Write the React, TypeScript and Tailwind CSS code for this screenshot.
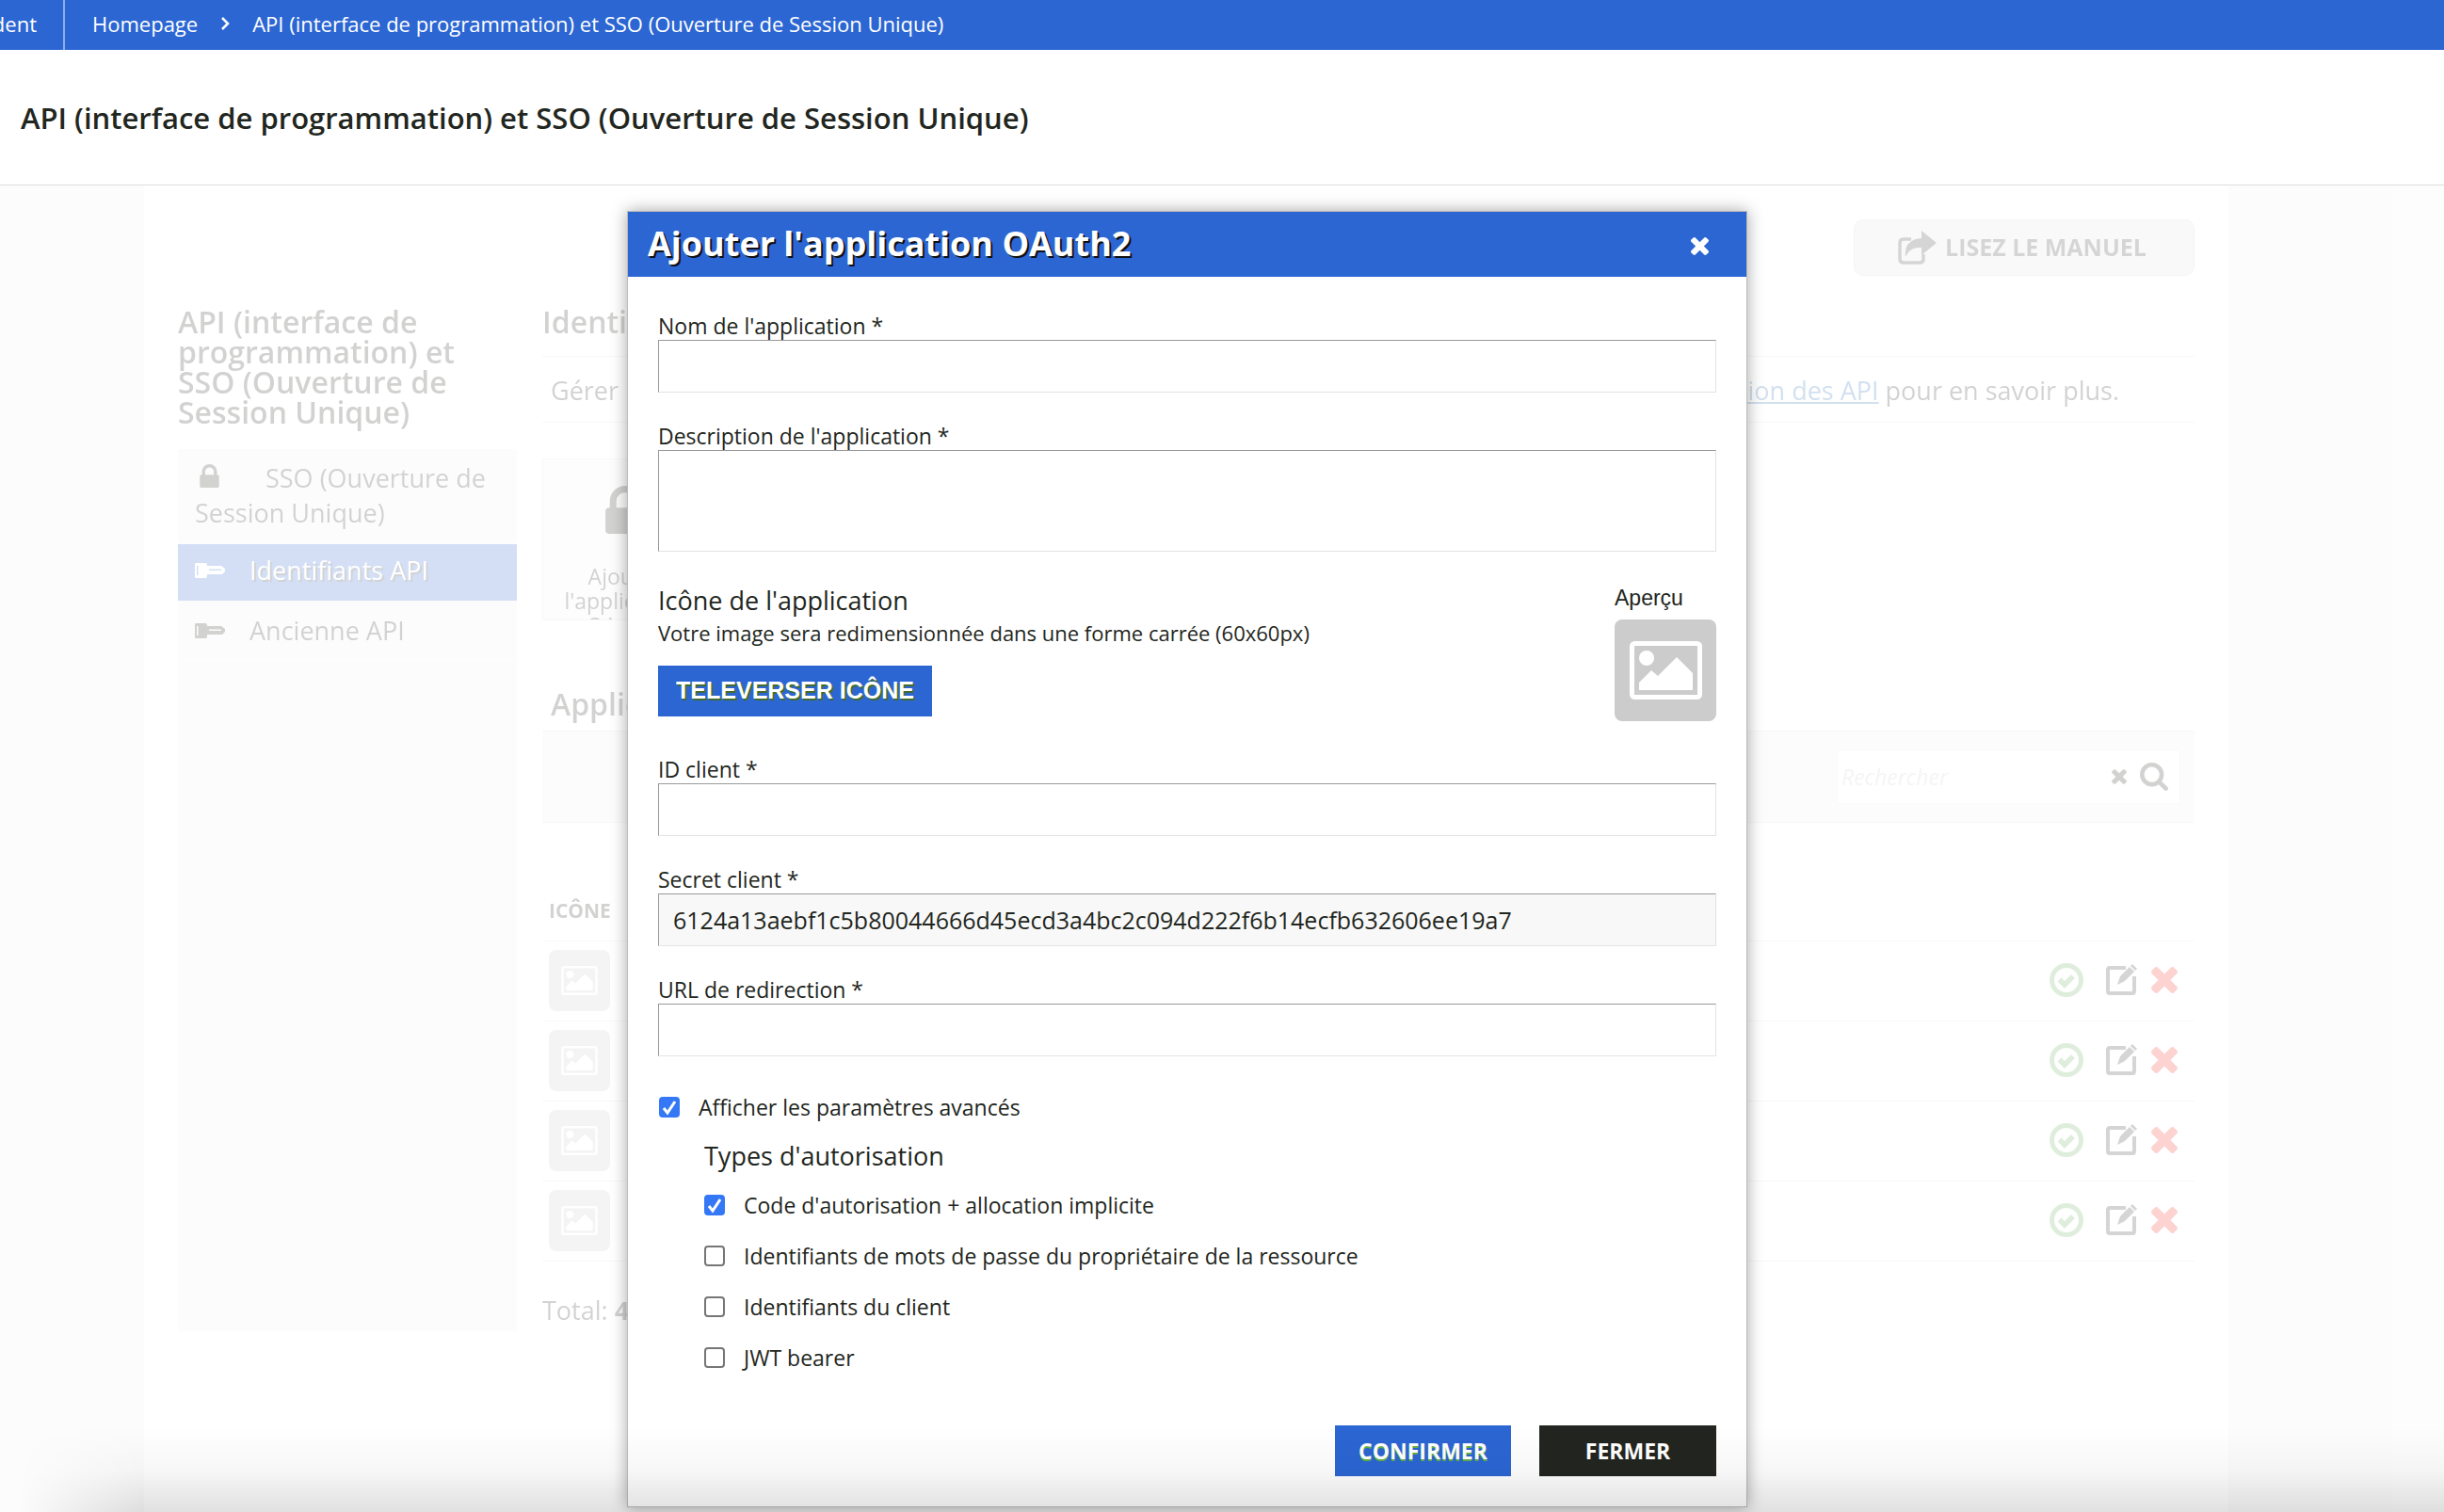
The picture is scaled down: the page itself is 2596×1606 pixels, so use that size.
import { useState } from 'react'
import type { ReactNode } from 'react'

const TIMES =
  'M1490 1322q0 40-28 68l-136 136q-28 28-68 28t-68-28l-294-294-294 294q-28 28-68 28t-68-28l-136-136q-28-28-28-68t28-68l294-294-294-294q-28-28-28-68t28-68l136-136q28-28 68-28t68 28l294 294 294-294q28-28 68-28t68 28l136 136q28 28 28 68t-28 68l-294 294 294 294q28 28 28 68z'

function TimesIcon({ className }: { className: string }) {
  return (
    <svg viewBox="302 366 1188 1188" className={className} fill="currentColor" aria-hidden="true">
      <path d={TIMES} />
    </svg>
  )
}

function LockIcon({ className }: { className: string }) {
  return (
    <svg viewBox="320 128 1152 1408" className={className} fill="currentColor" aria-hidden="true">
      <path d="M640 768h512v-192q0-106-75-181t-181-75-181 75-75 181v192zm832 96v576q0 40-28 68t-68 28h-960q-40 0-68-28t-28-68v-576q0-40 28-68t68-28h32v-192q0-184 132-316t316-132 316 132 132 316v192h32q40 0 68 28t28 68z" />
    </svg>
  )
}

function SearchIcon({ className }: { className: string }) {
  return (
    <svg viewBox="64 128 1664 1664" className={className} fill="currentColor" aria-hidden="true">
      <path d="M1216 832q0-185-131.5-316.5t-316.5-131.5-316.5 131.5-131.5 316.5 131.5 316.5 316.5 131.5 316.5-131.5 131.5-316.5zm512 832q0 52-38 90t-90 38q-54 0-90-38l-343-342q-179 124-399 124-143 0-273.5-55.5t-225-150-150-225-55.5-273.5 55.5-273.5 150-225 225-150 273.5-55.5 273.5 55.5 225 150 150 225 55.5 273.5q0 220-124 399l343 343q37 37 37 90z" />
    </svg>
  )
}

function KeyIcon({ className }: { className: string }) {
  return (
    <svg viewBox="0 0 32 18" className={className} fill="currentColor" aria-hidden="true">
      <path fillRule="evenodd" d="M1 1h10q2 0 2 2v12q0 2-2 2H1q-1 0-1-1V2q0-1 1-1zm1 3v10h1.500V4z" />
      <path fillRule="evenodd" d="M13 4h15l4 3v3l-3 3H13zm2 3.500v1.500h13V7.500z" />
    </svg>
  )
}

function ShareIcon({ className }: { className: string }) {
  return (
    <svg viewBox="0 0 42 36" className={className} aria-hidden="true">
      <path d="M14 9H6q-4 0-4 4v17q0 4 4 4h17q4 0 4-4v-5" fill="none" stroke="currentColor" strokeWidth="3.500" />
      <path d="M25 0l16 13-16 13v-8q-12-1-17 10Q6 9 25 8z" fill="currentColor" />
    </svg>
  )
}

function CheckCircleIcon() {
  return (
    <svg viewBox="0 0 36 36" className="h-9 w-9" fill="none" stroke="currentColor" aria-hidden="true">
      <circle cx="18" cy="18" r="15.500" strokeWidth="5" />
      <path d="M10.500 17.500l5.500 5.500L25 14" strokeWidth="5.500" />
    </svg>
  )
}

function EditIcon() {
  return (
    <svg viewBox="0 0 33 33" className="h-[33px] w-[33px]" aria-hidden="true">
      <path d="M21 4H4q-2 0-2 2v23q0 2 2 2h24q2 0 2-2V13" fill="none" stroke="currentColor" strokeWidth="4" />
      <path d="M12 22l3-9L25 3l5 5-10 10z" fill="currentColor" />
      <path d="M26 2l2-2 5 5-2 2z" fill="currentColor" />
    </svg>
  )
}

function PictureIcon({ className }: { className: string }) {
  return (
    <svg viewBox="0 0 77 62" className={className} aria-hidden="true">
      <rect x="2.500" y="2.500" width="72" height="57" rx="3" fill="none" stroke="#fff" strokeWidth="5" />
      <circle cx="18" cy="18" r="8" fill="#fff" />
      <path d="M10 52v-8l13-13 7 6 20-20 17 17v18z" fill="#fff" />
    </svg>
  )
}

const rows = [1, 2, 3, 4]

function Credentials() {
  return (
    <div className="flex min-h-[1409px] bg-[#f4f4f4] pl-[153px] pr-[229px] opacity-20">
      <div className="flex-1 bg-white pl-9 pr-9 pt-9">
        <div className="flex justify-end">
          <button className="flex h-[60px] w-[362px] items-center justify-center gap-2 rounded-[10px] border border-[#ccc] bg-[#e6e6e6] pr-1 text-[25px] font-bold text-[#333]">
            <ShareIcon className="h-9 w-[42px]" />
            LISEZ LE MANUEL
          </button>
        </div>
        <div className="mt-8 flex gap-[27px]">
          <aside className="w-[360px] shrink-0">
            <h2 className="pt-px text-[32px] font-semibold leading-8">
              API (interface de programmation) et SSO (Ouverture de Session Unique)
            </h2>
            <nav className="mt-[23px] h-[937px] bg-[#f3f3f3] text-[27px]">
              <a href="#sso" className="block border-b-4 border-[#fafafa] px-[18px] pb-[11px] pt-3 leading-[37px]">
                <LockIcon className="mr-[49px] ml-[5px] inline h-[25px] w-[21px] align-baseline" />
                SSO (Ouverture de Session Unique)
              </a>
              <a href="#api" className="flex h-[60px] items-center gap-[26px] bg-[#2c66d3] px-[18px] pb-1 text-white [text-shadow:2px_2px_1px_#222]">
                <KeyIcon className="h-[18px] w-8" />
                Identifiants API
              </a>
              <a href="#old" className="flex h-16 items-center gap-[26px] border-b-2 border-[#fafafa] px-[18px] pt-0.5">
                <KeyIcon className="h-[18px] w-8" />
                Ancienne API
              </a>
            </nav>
          </aside>
          <main className="flex-1">
            <h2 className="h-[54px] border-b border-[#ddd] text-[32px] font-semibold leading-[33px]">Identifiants API</h2>
            <p className="flex h-[70px] items-center justify-between border-b border-[#ddd] pl-[9px] pr-20 pt-1 text-[27px]">
              <span>Gérer</span>
              <span>
                <a href="#doc" className="text-[#2369b4] underline">documentation des API</a> pour en savoir plus.
              </span>
            </p>
            <button className="mt-[38px] flex h-[172px] w-[176px] flex-col items-center overflow-hidden border border-[#ddd] bg-[#f6f6f6] px-3 pt-7 text-[23px] leading-[26px]">
              <LockIcon className="mb-8 h-[51px] w-[42px] shrink-0" />
              Ajouter l'application OAuth2
            </button>
            <h3 className="mt-[66px] pb-[5px] pl-[9px] text-[32px] font-semibold leading-[46px]">Applications</h3>
            <div className="flex h-[98px] items-center justify-end border-y border-[#ddd] bg-[#f3f3f3] pr-[15px]">
              <div className="flex h-[58px] w-[365px] items-center border border-[#e8e8e8] bg-white pl-1 pr-3">
                <input aria-label="Rechercher" placeholder="Rechercher" className="w-0 flex-1 text-[23px] italic outline-none placeholder:text-[#ccc]" />
                <TimesIcon className="mr-3.5 h-4 w-4" />
                <SearchIcon className="h-[30px] w-[30px]" />
              </div>
            </div>
            <table className="mt-[66px] w-full">
              <thead>
                <tr className="border-b border-[#ddd]">
                  <th className="h-[59px] pb-1 pl-[7px] text-left text-[21px] leading-[30px]">ICÔNE</th>
                  <th></th>
                </tr>
              </thead>
              <tbody>
                {rows.map(i => (
                  <tr key={i} className="h-[85px] border-b border-[#ddd]">
                    <td className="pl-[7px]">
                      <div className="flex h-[65px] w-[65px] items-center justify-center rounded-lg bg-[#ccc]">
                        <PictureIcon className="h-[31px] w-[39px]" />
                      </div>
                    </td>
                    <td className="pb-0.5 pr-[18px]">
                      <div className="flex items-center justify-end">
                        <button aria-label="Activer" className="mr-6 text-[#64af55]"><CheckCircleIcon /></button>
                        <button aria-label="Modifier" className="mr-[15px] text-[#333]"><EditIcon /></button>
                        <button aria-label="Supprimer" className="text-[#f52a1e]"><TimesIcon className="h-7 w-7" /></button>
                      </div>
                    </td>
                  </tr>
                ))}
              </tbody>
            </table>
            <p className="mt-8 text-[27px] leading-[40px]">Total: <b>4</b></p>
          </main>
        </div>
      </div>
    </div>
  )
}

const boxClass =
  'block w-full border border-[#e3e3e3] border-l-[#999] border-t-[#999] bg-white px-[15px] text-[25px] outline-none read-only:bg-[#f8f8f8]'
const labelClass = 'block pb-0.5 text-[23px] leading-[26px]'

function Field({ id, label, value }: { id: string; label: string; value?: string }) {
  return (
    <div>
      <label htmlFor={id} className={labelClass}>{label}</label>
      <input id={id} className={`${boxClass} h-14`} defaultValue={value} readOnly={value !== undefined} />
    </div>
  )
}

function Check({ checked = false, children }: { checked?: boolean; children: ReactNode }) {
  const [on, setOn] = useState(checked)
  return (
    <label className="flex h-[54px] items-center gap-5 text-[23px]">
      <span className="relative flex h-[22px] w-[22px]">
        <input
          type="checkbox"
          checked={on}
          onChange={e => setOn(e.target.checked)}
          className="h-[22px] w-[22px] appearance-none rounded-[4px] border-2 border-[#767676] bg-white checked:border-[#3478f6] checked:bg-[#3478f6]"
        />
        {on && (
          <svg viewBox="0 0 22 22" className="pointer-events-none absolute inset-0" fill="none" stroke="#fff" strokeWidth="3" aria-hidden="true">
            <path d="M5 12l4 5 8-12" />
          </svg>
        )}
      </span>
      {children}
    </label>
  )
}

function AddApplicationDialog() {
  return (
    <div className="absolute inset-x-0 top-[224px] flex justify-center pr-[74px]">
      <div role="dialog" aria-labelledby="dialog-title" className="w-[1190px] border border-[#bbb] bg-white shadow-[0_0_16px_rgba(0,0,0,0.35)]">
        <div className="flex h-[69px] items-center justify-between bg-[#2c66d3] pl-[21px] pr-10 text-white">
          <h2 id="dialog-title" className="pb-0.5 text-[36px] font-bold leading-[67px] [text-shadow:2px_2px_0_#111]">
            Ajouter l'application OAuth2
          </h2>
          <button aria-label="Fermer la fenêtre" className="pt-1"><TimesIcon className="h-[19px] w-[19px]" /></button>
        </div>
        <form className="px-8 pb-8 pt-[39px]" onSubmit={e => e.preventDefault()}>
          <div className="space-y-[33px]">
            <Field id="name" label="Nom de l'application *" />
            <div>
              <label htmlFor="description" className={labelClass}>Description de l'application *</label>
              <textarea id="description" className={`${boxClass} h-[108px] resize-none`} />
            </div>
          </div>
          <div className="mt-[34px] flex justify-between">
            <div>
              <h3 className="text-[27px] leading-9">Icône de l'application</h3>
              <p className="mt-0.5 text-[22px] leading-[28px]">Votre image sera redimensionnée dans une forme carrée (60x60px)</p>
              <button className="mt-[21px] h-[54px] w-[291px] bg-[#2c66d3] font-['Liberation_Sans',Arial,sans-serif] text-[25px] font-bold text-white [text-shadow:2px_2px_0_#406b30]">
                TELEVERSER ICÔNE
              </button>
            </div>
            <div className="w-[108px]">
              <p className="font-['Liberation_Sans',Arial,sans-serif] text-[23px] leading-[30px]">Aperçu</p>
              <div className="mt-2 flex h-[108px] items-center justify-center rounded-lg bg-[#ccc]">
                <PictureIcon className="h-[62px] w-[77px]" />
              </div>
            </div>
          </div>
          <div className="mt-[38px] space-y-[33px]">
            <Field id="client-id" label="ID client *" />
            <Field id="client-secret" label="Secret client *" value="6124a13aebf1c5b80044666d45ecd3a4bc2c094d222f6b14ecfb632606ee19a7" />
            <Field id="redirect-url" label="URL de redirection *" />
          </div>
          <div className="mt-[27px] pl-px">
            <Check checked>Afficher les paramètres avancés</Check>
            <fieldset className="pl-12">
              <legend className="text-[27px] leading-[50px]">Types d'autorisation</legend>
              <Check checked>Code d'autorisation + allocation implicite</Check>
              <Check>Identifiants de mots de passe du propriétaire de la ressource</Check>
              <Check>Identifiants du client</Check>
              <Check>JWT bearer</Check>
            </fieldset>
          </div>
          <div className="mt-[45px] flex justify-end gap-[30px] text-[23px] font-bold text-white">
            <button className="h-[54px] w-[187px] bg-[#2c66d3] [text-shadow:0_2px_0_#5fae46]">CONFIRMER</button>
            <button type="button" className="h-[54px] w-[188px] bg-[#232620]">FERMER</button>
          </div>
        </form>
      </div>
    </div>
  )
}

export default function App() {
  return (
    <div className="relative h-screen overflow-hidden bg-white font-['Open_Sans','Noto_Sans',sans-serif] text-[#222620]">
      <header className="flex h-[53px] items-center overflow-hidden bg-[#2c66d3] text-[22px] font-medium text-white">
        <div className="flex h-full w-[69px] shrink-0 items-center justify-end border-r-2 border-[#8eaee8] pb-[3px] pr-7">
          <span>Président</span>
        </div>
        <nav className="flex items-center pb-[3px] pl-[29px]">
          <a href="#home">Homepage</a>
          <svg viewBox="0 0 10 16" className="ml-6 mr-6 h-4 w-[10px]" fill="none" stroke="currentColor" strokeWidth="2.500" aria-hidden="true">
            <path d="M2 2l6 6-6 6" />
          </svg>
          <a href="#api-sso">API (interface de programmation) et SSO (Ouverture de Session Unique)</a>
        </nav>
      </header>
      <div className="flex h-36 items-center border-b border-[#ddd] pl-[22px]">
        <h1 className="pt-px text-[31px] font-semibold">API (interface de programmation) et SSO (Ouverture de Session Unique)</h1>
      </div>
      <Credentials />
      <AddApplicationDialog />
      <div className="pointer-events-none absolute inset-x-0 bottom-0 h-[90px] bg-linear-to-t from-black/12 via-black/3 to-transparent [mask-image:linear-gradient(to_right,transparent_20px,black_150px)]" />
    </div>
  )
}
